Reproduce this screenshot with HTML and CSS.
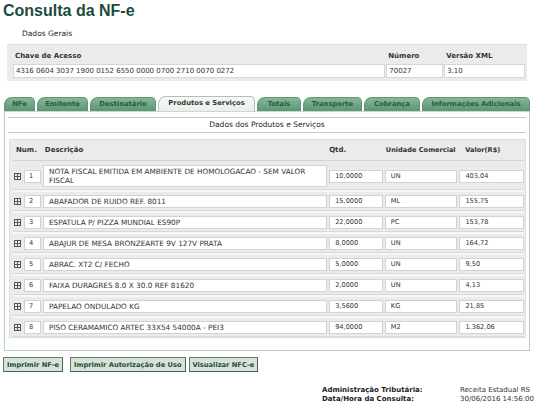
FILE: index.html
```html
<!DOCTYPE html>
<html lang="pt-BR">
<head>
<meta charset="utf-8">
<title>Consulta da NF-e</title>
<link rel="stylesheet" href="styles.css">
</head>
<body>
<div class="page">
  <h1 class="title">Consulta da NF-e</h1>
  <div class="section-label">Dados Gerais</div>
  <div class="general">
    <div class="gcol gcol-key">
      <div class="glabel">Chave de Acesso</div>
      <div class="gval">4316 0604 3037 1900 0152 6550 0000 0700 2710 0070 0272</div>
    </div>
    <div class="gcol gcol-num">
      <div class="glabel">Número</div>
      <div class="gval">70027</div>
    </div>
    <div class="gcol gcol-ver">
      <div class="glabel">Versão XML</div>
      <div class="gval">3.10</div>
    </div>
  </div>

  <div class="tabs">
    <div class="tab t-nfe">NFe</div>
    <div class="tab t-emit">Emitente</div>
    <div class="tab t-dest">Destinatário</div>
    <div class="tab t-prod active">Produtos e Serviços</div>
    <div class="tab t-tot">Totais</div>
    <div class="tab t-trans">Transporte</div>
    <div class="tab t-cob">Cobrança</div>
    <div class="tab t-info">Informações Adicionais</div>
  </div>
  <div class="panel">
    <div class="panel-head">Dados dos Produtos e Serviços</div>
    <div class="prod">
      <div class="prow phead">
        <div class="c-num">Num.</div>
        <div class="c-desc">Descrição</div>
        <div class="c-qty">Qtd.</div>
        <div class="c-un">Unidade Comercial</div>
        <div class="c-val">Valor(R$)</div>
      </div>
      <div class="prow item first">
        <div class="c-num"><span class="exp"></span><span class="box n">1</span></div>
        <div class="c-desc box tall">NOTA FISCAL EMITIDA EM AMBIENTE DE HOMOLOGACAO - SEM VALOR FISCAL</div>
        <div class="c-qty box">10,0000</div>
        <div class="c-un box">UN</div>
        <div class="c-val box">403,04</div>
      </div>
      <div class="prow item">
        <div class="c-num"><span class="exp"></span><span class="box n">2</span></div>
        <div class="c-desc box">ABAFADOR DE RUIDO REF. 8011</div>
        <div class="c-qty box">15,0000</div>
        <div class="c-un box">ML</div>
        <div class="c-val box">155,75</div>
      </div>
      <div class="prow item">
        <div class="c-num"><span class="exp"></span><span class="box n">3</span></div>
        <div class="c-desc box">ESPATULA P/ PIZZA MUNDIAL ES90P</div>
        <div class="c-qty box">22,0000</div>
        <div class="c-un box">PC</div>
        <div class="c-val box">153,78</div>
      </div>
      <div class="prow item">
        <div class="c-num"><span class="exp"></span><span class="box n">4</span></div>
        <div class="c-desc box">ABAJUR DE MESA BRONZEARTE 9V 127V PRATA</div>
        <div class="c-qty box">8,0000</div>
        <div class="c-un box">UN</div>
        <div class="c-val box">164,72</div>
      </div>
      <div class="prow item">
        <div class="c-num"><span class="exp"></span><span class="box n">5</span></div>
        <div class="c-desc box">ABRAC. XT2 C/ FECHO</div>
        <div class="c-qty box">5,0000</div>
        <div class="c-un box">UN</div>
        <div class="c-val box">9,50</div>
      </div>
      <div class="prow item">
        <div class="c-num"><span class="exp"></span><span class="box n">6</span></div>
        <div class="c-desc box">FAIXA DURAGRES 8.0 X 30.0 REF 81620</div>
        <div class="c-qty box">2,0000</div>
        <div class="c-un box">UN</div>
        <div class="c-val box">4,13</div>
      </div>
      <div class="prow item">
        <div class="c-num"><span class="exp"></span><span class="box n">7</span></div>
        <div class="c-desc box">PAPELAO ONDULADO KG</div>
        <div class="c-qty box">3,5600</div>
        <div class="c-un box">KG</div>
        <div class="c-val box">21,85</div>
      </div>
      <div class="prow item">
        <div class="c-num"><span class="exp"></span><span class="box n">8</span></div>
        <div class="c-desc box">PISO CERAMAMICO ARTEC 33X54 54000A - PEI3</div>
        <div class="c-qty box">94,0000</div>
        <div class="c-un box">M2</div>
        <div class="c-val box">1.362,06</div>
      </div>
    </div>
  </div>

  <div class="buttons">
    <button class="btn">Imprimir NF-e</button>
    <button class="btn">Imprimir Autorização de Uso</button>
    <button class="btn">Visualizar NFC-e</button>
  </div>

  <div class="footer">
    <div class="flabels">
      <div>Administração Tributária:</div>
      <div>Data/Hora da Consulta:</div>
    </div>
    <div class="fvals">
      <div>Receita Estadual RS</div>
      <div>30/06/2016 14:56:00</div>
    </div>
  </div>
</div>
</body>
</html>
```

FILE: styles.css
```css
* { box-sizing: border-box; }
html, body { margin: 0; padding: 0; background: #fff; }
body {
  font-family: "DejaVu Sans", Verdana, sans-serif;
  font-size: 7px;
  color: #333;
}
.page { width: 550px; padding: 2px 0 0 0; }

.title {
  margin: 0 0 0 3px;
  font-family: "Liberation Sans", Arial, sans-serif;
  font-size: 16px;
  font-weight: bold;
  line-height: 18px;
  color: #1b4c3e;
}
.section-label {
  margin: 9px 0 0 22px;
  font-size: 7.5px;
  line-height: 10px;
  color: #222;
}
.general {
  display: flex;
  gap: 1px;
  margin: 5px 0 0 7px;
  width: 520px;
  background: #ebebeb;
  border-top: 1px solid #dcdcdc;
  padding: 4px 2px 3px 6px;
}
.gcol { display: flex; flex-direction: column; }
.gcol-key { width: 373px; }
.gcol-num { width: 57px; }
.gcol-ver { width: 81px; }
.glabel {
  font-weight: bold;
  color: #333;
  line-height: 10px;
  padding: 2px 0 3px 2px;
}
.gval {
  background: #fff;
  border: 1px solid #d6d6d6;
  height: 14px;
  line-height: 12px;
  padding-left: 2px;
  color: #333;
}

.tabs {
  display: flex;
  margin: 15px 0 0 4px;
  gap: 2px;
  height: 15px;
  align-items: flex-end;
}
.tab {
  height: 14px;
  line-height: 13px;
  text-align: center;
  white-space: nowrap;
  font-weight: bold;
  font-size: 6.8px;
  color: #2a5a40;
  background: linear-gradient(#86b796, #5c9574);
  border: 1px solid #5f9476;
  border-bottom: none;
  border-radius: 8px 5px 0 0;
}
.t-nfe { width: 31px; }
.t-emit { width: 51px; }
.t-dest { width: 66px; }
.t-prod { width: 97px; }
.t-tot { width: 44px; }
.t-trans { width: 59px; }
.t-cob { width: 56px; }
.t-info { width: 108px; }
.tab.active {
  height: 15px;
  background: linear-gradient(#f8f8f8, #eeeeee);
  border-color: #a9c4b3;
  color: #2b3d33;
}
.panel {
  margin-left: 4px;
  width: 526px;
  height: 240px;
  border: 1px solid #b3d0c0;
  border-top-color: #c8d8cf;
  padding: 5px 3px 0 3px;
}
.panel-head {
  text-align: center;
  font-size: 7.5px;
  line-height: 14px;
  height: 16px;
  border-top: 1px solid #c8c8c8;
  border-bottom: 1px solid #c8c8c8;
  color: #222;
}
.prod {
  margin: 6px 0 0 1px;
  width: 517px;
  background: #ebebeb;
  border: 1px solid #dedede;
  padding: 0 1px 0 3px;
}
.prow {
  display: flex;
  gap: 2px;
  align-items: center;
}
.phead {
  height: 21px;
  font-weight: bold;
  color: #333;
  white-space: nowrap;
  border-bottom: 1px solid #d4d4d4;
}
.phead .c-num { padding-left: 3px; }
.phead .c-un { font-size: 6.6px; padding-left: 1px; }
.phead .c-val { font-size: 6.6px; padding-left: 6px; }
.item {
  padding: 3px 0 2px 0;
  border-top: 2px solid #f7f7f7;
  border-bottom: 1px solid #d8d8d8;
}
.item.first { border-top: none; padding-top: 4px; }
.c-num { width: 28px; display: flex; align-items: center; }
.c-desc { width: 286px; }
.c-qty { width: 54px; }
.c-un { width: 73px; }
.c-val { width: 65px; }
.phead .c-desc { padding-left: 2px; }
.box {
  background: #fff;
  border: 1px solid #d2d2d2;
  height: 13px;
  line-height: 11px;
  padding-left: 4px;
  color: #333;
  font-size: 6.6px;
}
.item .c-desc.box { font-size: 7.3px; padding-right: 4px; white-space: normal; }
.box.tall { height: 22px; line-height: 9px; padding-top: 1px; }
.box.n { width: 17px; padding-left: 4px; }
.exp {
  width: 7px;
  height: 7px;
  margin: 0 3px 0 1px;
  border: 1px solid #555;
  background:
    linear-gradient(#555, #555) center / 5px 1px no-repeat,
    linear-gradient(#555, #555) center / 1px 5px no-repeat,
    #f0f0f0;
}
.item .c-desc, .item .c-qty, .item .c-un, .item .c-val { padding-left: 5px; }

.buttons {
  display: flex;
  margin: 6px 0 0 3px;
  gap: 3px;
}
.btn {
  font-family: "DejaVu Sans", Verdana, sans-serif;
  font-size: 6.7px;
  font-weight: bold;
  color: #284a3a;
  background: #d6e3d9;
  border: 1px solid #5f7f6d;
  border-right-color: #456253;
  border-bottom-color: #456253;
  height: 15px;
  padding: 0 3px;
  line-height: 12px;
}
.btn:nth-child(2) { margin-left: 4px; }

.footer {
  display: flex;
  margin: 14px 0 0 322px;
  line-height: 9px;
}
.flabels { width: 138px; font-weight: bold; color: #222; }
.fvals { color: #333; }
```
